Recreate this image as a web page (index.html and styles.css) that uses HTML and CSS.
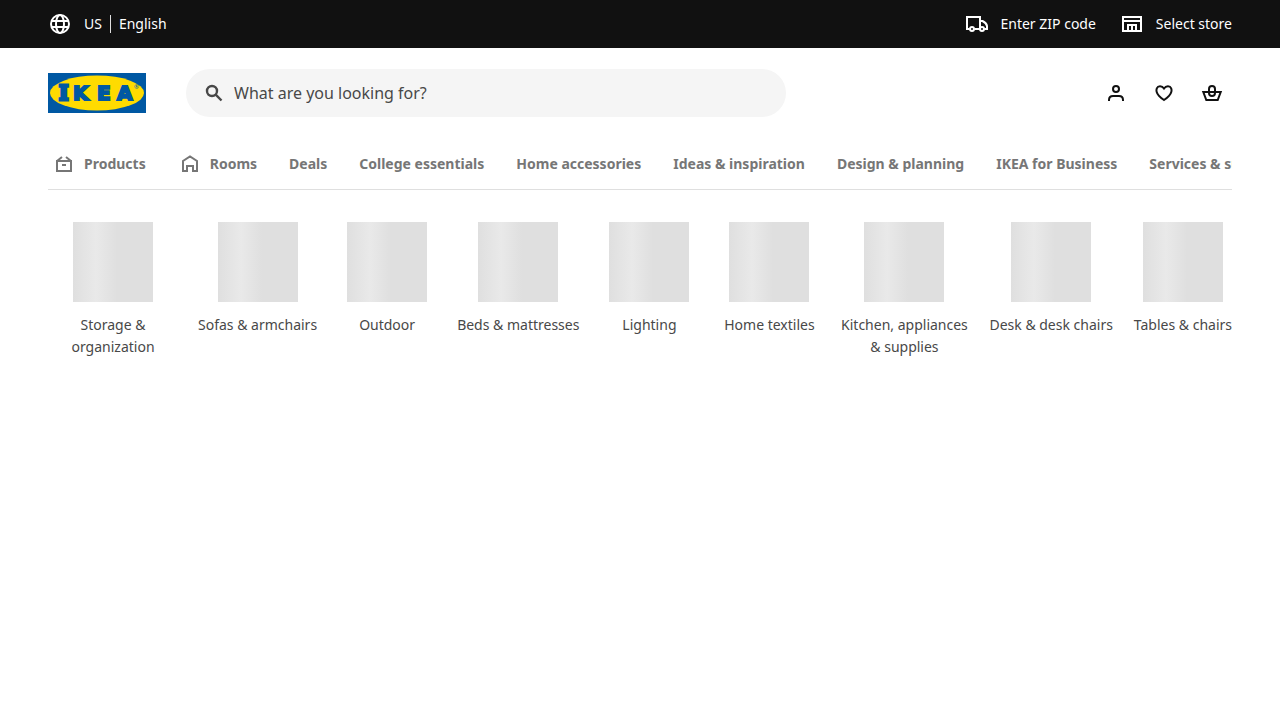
FILE: index.html
```html
<!DOCTYPE html>
<html lang="en">
<head>
<meta charset="utf-8">
<meta name="viewport" content="width=device-width, initial-scale=1">
<title>IKEA US</title>
<link rel="stylesheet" href="styles.css">
</head>
<body>
<div class="utility">
  <a class="utility-link locale" href="#">
    <svg class="icon" viewBox="0 0 24 24" aria-hidden="true"><circle cx="12" cy="12" r="9"/><ellipse cx="12" cy="12" rx="4" ry="9"/><path d="M4 9h16M4 15h16"/></svg>
    <span class="locale-text"><span>US</span><span class="language">English</span></span>
  </a>
  <div class="utility-end">
    <button class="utility-link" type="button">
      <svg class="icon" viewBox="0 0 24 24" aria-hidden="true"><path d="M5.500 17H3V5h13v12H10.500M16 9h2.500q4 2 4.500 5v3h-2.500M16 17h-1"/><circle cx="8" cy="17" r="2"/><circle cx="18" cy="17" r="2"/></svg>
      Enter ZIP code
    </button>
    <button class="utility-link" type="button">
      <svg class="icon" viewBox="0 0 24 24" aria-hidden="true"><path d="M3 5h18v14H3zM3 9h18M8 19v-6h8v6M12 13v6"/></svg>
      Select store
    </button>
  </div>
</div>
<header class="header">
  <a class="logo" href="#" aria-label="IKEA home">
    <svg viewBox="0 0 98 40" aria-hidden="true">
      <rect width="98" height="40" fill="#0058a3"/>
      <ellipse cx="49" cy="20" rx="47" ry="17.500" fill="#ffdb00"/>
      <text class="logo-word" x="11 25 49 69" y="27"><tspan class="logo-slab">I</tspan>KEA</text>
      <text class="logo-mark" x="86" y="16">®</text>
    </svg>
  </a>
  <form class="search" role="search">
    <svg class="icon search-icon" viewBox="0 0 24 24" aria-hidden="true"><circle cx="10" cy="10" r="5"/><path d="m13.700 13.700 5.800 5.800"/></svg>
    <input class="search-input" type="search" placeholder="What are you looking for?" aria-label="What are you looking for?">
  </form>
  <div class="actions">
    <button class="action" type="button" aria-label="Account"><svg class="icon" viewBox="0 0 24 24"><rect x="9" y="5" width="6" height="6" rx="3"/><path d="M5 20v-1q0-4 4-4h6q4 0 4 4v1"/></svg></button>
    <button class="action" type="button" aria-label="Favorites"><svg class="icon" viewBox="0 0 24 24"><path d="M12 7.500C10 4.500 6 4.500 4.800 7.300C3.500 10.500 5 12.500 7 14.800Q9 17 12 19Q15 17 17 14.800C19 12.500 20.500 10.500 19.200 7.300C18 4.500 14 4.500 12 7.500z"/></svg></button>
    <button class="action" type="button" aria-label="Shopping bag"><svg class="icon" viewBox="0 0 24 24"><path d="M3.300 11h17.400l-3 8H6.300z"/><rect x="9" y="5" width="6" height="10" rx="3"/></svg></button>
  </div>
</header>
<nav class="nav" aria-label="Main">
  <a class="nav-link" href="#"><svg class="icon" viewBox="0 0 24 24" aria-hidden="true"><path d="M5 9h14v10H5zM5 9l5-4M19 9l-5-4M10 13h4"/></svg>Products</a>
  <a class="nav-link" href="#"><svg class="icon" viewBox="0 0 24 24" aria-hidden="true"><path d="M5 19V9l7-4.500L19 9v10h-4v-5H9v5z"/></svg>Rooms</a>
  <a class="nav-link" href="#">Deals</a>
  <a class="nav-link" href="#">College essentials</a>
  <a class="nav-link" href="#">Home accessories</a>
  <a class="nav-link" href="#">Ideas &amp; inspiration</a>
  <a class="nav-link" href="#">Design &amp; planning</a>
  <a class="nav-link" href="#">IKEA for Business</a>
  <a class="nav-link" href="#">Services &amp; support</a>
</nav>
<main class="categories">
  <a class="category" href="#"><span class="thumb"></span>Storage &amp; organization</a>
  <a class="category" href="#"><span class="thumb"></span>Sofas &amp; armchairs</a>
  <a class="category" href="#"><span class="thumb"></span>Outdoor</a>
  <a class="category" href="#"><span class="thumb"></span>Beds &amp; mattresses</a>
  <a class="category" href="#"><span class="thumb"></span>Lighting</a>
  <a class="category" href="#"><span class="thumb"></span>Home textiles</a>
  <a class="category" href="#"><span class="thumb"></span>Kitchen, appliances &amp; supplies</a>
  <a class="category" href="#"><span class="thumb"></span>Desk &amp; desk chairs</a>
  <a class="category" href="#"><span class="thumb"></span>Tables &amp; chairs</a>
</main>
</body>
</html>
```
FILE: styles.css
```css
* { box-sizing: border-box; }
body {
  margin: 0;
  background: #fff;
  color: #484848;
  font: 14px/22px "Noto Sans", sans-serif;
}
a { color: inherit; text-decoration: none; }
button { border: 0; padding: 0; background: none; color: inherit; font: inherit; cursor: pointer; }
.icon { width: 24px; height: 24px; flex: none; fill: none; stroke: currentColor; stroke-width: 2; }

.utility {
  display: flex;
  align-items: center;
  justify-content: space-between;
  height: 48px;
  padding: 0 48px;
  background: #111;
  color: #fff;
}
.utility-end { display: flex; gap: 24px; }
.utility-link { display: flex; align-items: center; gap: 12px; }
.locale-text { display: flex; align-items: center; line-height: 18px; }
.language { margin-left: 8px; padding-left: 8px; border-left: 1px solid #dfdfdf; }

.header { display: flex; align-items: center; padding: 21px 48px; }
.logo { width: 98px; height: 40px; flex: none; margin-right: 40px; }
.logo svg { display: block; width: 100%; }
.logo-word {
  font: bold 20px "DejaVu Sans", sans-serif;
  fill: #0058a3;
  stroke: #0058a3;
  stroke-width: 2;
}
.logo-slab { font-family: "DejaVu Serif", serif; stroke-width: 3; }
.logo-mark { font: 6px "Noto Sans", sans-serif; fill: #0058a3; }
.search {
  display: flex;
  align-items: center;
  gap: 8px;
  flex: 0 1 600px;
  height: 48px;
  padding: 0 16px;
  border-radius: 24px;
  background: #f5f5f5;
}
.search-icon { color: #484848; stroke-width: 2.4; }
.search-input {
  flex: 1;
  min-width: 0;
  border: 0;
  padding: 0;
  outline: 0;
  background: none;
  color: #484848;
  font: 16px/24px "Noto Sans", sans-serif;
}
.search-input::placeholder { color: #484848; opacity: 1; }
.actions { display: flex; margin-left: auto; color: #111; }
.action { display: grid; place-items: center; width: 40px; height: 40px; }
.action + .action { margin-left: 8px; }

.nav {
  display: flex;
  gap: 32px;
  margin: 0 48px;
  padding: 14px 4px 13px;
  overflow: hidden;
  border-bottom: 1px solid #dfdfdf;
  color: #767676;
  font-weight: 700;
  line-height: 24px;
  white-space: nowrap;
}
.nav-link { display: flex; align-items: center; flex: none; gap: 8px; }

.categories {
  display: flex;
  gap: 20px;
  margin: 0 48px;
  padding: 32px 0;
  overflow: hidden;
}
.category {
  display: flex;
  flex: none;
  flex-direction: column;
  align-items: center;
  gap: 12px;
  min-width: 100px;
  max-width: 130px;
  text-align: center;
}
.thumb {
  width: 80px;
  height: 80px;
  background: linear-gradient(90deg, #dfdfdf, #e9e9e9 23px, #dfdfdf 44px);
}
```
